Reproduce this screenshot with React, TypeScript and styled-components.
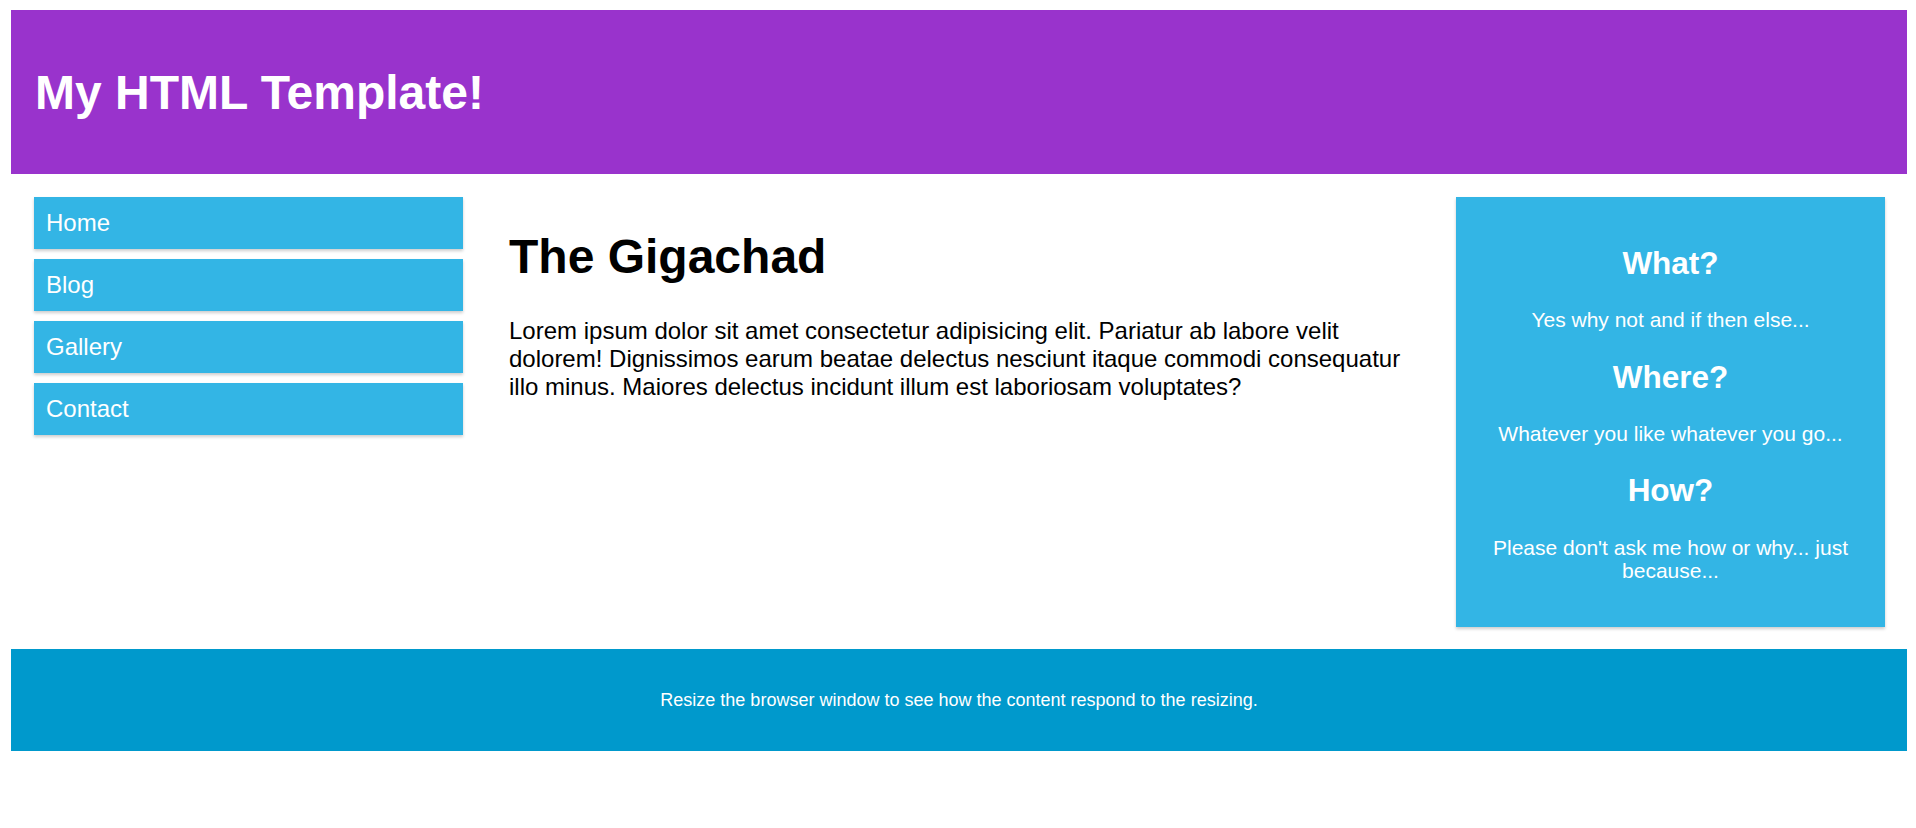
import React from "react";
import styled, { createGlobalStyle } from "styled-components";

const Global = createGlobalStyle`
  html, body { margin: 0; padding: 0; background: #ffffff; }
  body { font-family: "Liberation Sans", Arial, sans-serif; }
  * { box-sizing: border-box; }
`;

const Page = styled.div`
  padding: 10px 9px 0 11px;
`;

const Header = styled.header`
  background: #9933cc;
  color: #ffffff;
  padding: 54.5px 24px;
`;

const Title = styled.h1`
  margin: 0;
  font-size: 48px;
  line-height: 55px;
  font-weight: 700;
`;

const Main = styled.div`
  display: flex;
  align-items: flex-start;
  padding: 23px 22px 22px 23px;
`;

const Nav = styled.nav`
  width: 429px;
  flex: none;
  display: flex;
  flex-direction: column;
  gap: 10px;
`;

const NavItem = styled.div`
  height: 52px;
  display: flex;
  align-items: center;
  padding: 0 12px;
  background: #33b5e5;
  color: #ffffff;
  font-size: 24px;
  box-shadow: 0 2px 3px rgba(0, 0, 0, 0.2);
`;

const Content = styled.section`
  flex: 1;
  padding: 0 37px 0 46px;
  color: #000000;
`;

const Heading = styled.h1`
  margin: 31.5px 0 33px;
  font-size: 48px;
  line-height: 55px;
  font-weight: 700;
`;

const Text = styled.p`
  margin: 0;
  font-size: 24px;
  line-height: 28px;
`;

const Aside = styled.aside`
  width: 429px;
  flex: none;
  background: #33b5e5;
  color: #ffffff;
  text-align: center;
  padding: 48px 20px 44.5px;
  box-shadow: 0 2px 3px rgba(0, 0, 0, 0.2);
`;

const AsideTitle = styled.h2`
  margin: 0 0 27px;
  font-size: 31.5px;
  line-height: 36.2px;
  font-weight: 700;
`;

const AsideText = styled.p`
  margin: 0 0 27px;
  font-size: 21px;
  line-height: 23.5px;
  &:last-child { margin-bottom: 0; }
`;

const Footer = styled.footer`
  height: 102px;
  background: #0099cc;
  color: #ffffff;
  display: flex;
  align-items: center;
  justify-content: center;
  font-size: 18px;
`;

const navItems = ["Home", "Blog", "Gallery", "Contact"];

const asideBlocks = [
  { title: "What?", text: "Yes why not and if then else..." },
  { title: "Where?", text: "Whatever you like whatever you go..." },
  { title: "How?", text: "Please don't ask me how or why... just because..." },
];

export default function App() {
  return (
    <Page>
      <Global />
      <Header>
        <Title>My HTML Template!</Title>
      </Header>
      <Main>
        <Nav>
          {navItems.map((n) => (
            <NavItem key={n}>{n}</NavItem>
          ))}
        </Nav>
        <Content>
          <Heading>The Gigachad</Heading>
          <Text>
            Lorem ipsum dolor sit amet consectetur adipisicing elit. Pariatur ab labore velit
            dolorem! Dignissimos earum beatae delectus nesciunt itaque commodi consequatur illo
            minus. Maiores delectus incidunt illum est laboriosam voluptates?
          </Text>
        </Content>
        <Aside>
          {asideBlocks.map((b) => (
            <React.Fragment key={b.title}>
              <AsideTitle>{b.title}</AsideTitle>
              <AsideText>{b.text}</AsideText>
            </React.Fragment>
          ))}
        </Aside>
      </Main>
      <Footer>Resize the browser window to see how the content respond to the resizing.</Footer>
    </Page>
  );
}
